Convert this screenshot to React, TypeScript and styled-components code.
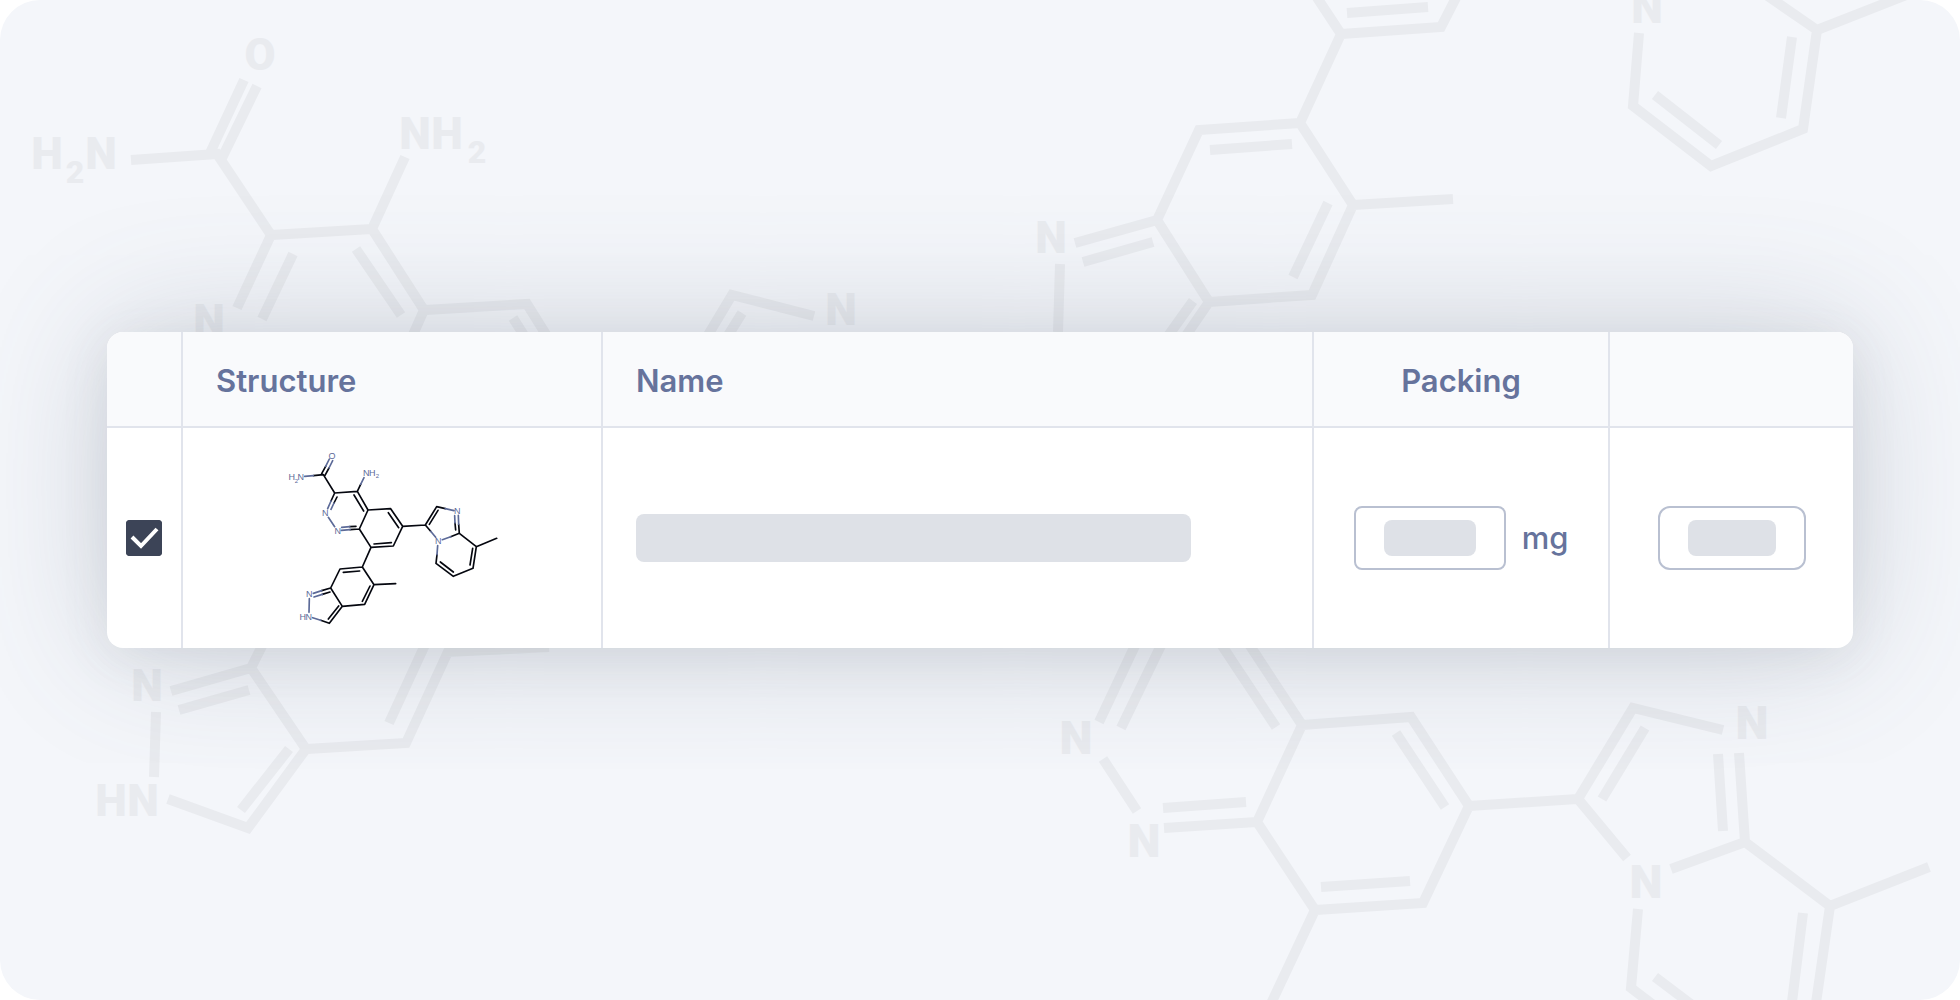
import React from "react";
import styled, { createGlobalStyle } from "styled-components";

const GlobalStyle = createGlobalStyle`
  *, *::before, *::after { box-sizing: border-box; }
  body {
    margin: 0;
    background: #ffffff;
    color: #66739c;
    font-family: Inter, "Liberation Sans", sans-serif;
  }
`;

const Stage = styled.main`
  position: relative;
  display: flex;
  align-items: center;
  min-height: 100vh;
  padding: 0 107px 20px;
  overflow: hidden;
  border-radius: 40px;
  background: #f4f6fa;
`;

const Backdrop = styled.svg`
  position: absolute;
  inset: 0;
  width: 100%;
  height: 100%;
  fill: none;
  stroke: #e9ebef;
  stroke-width: 10;

  text {
    fill: #e9ebef;
    stroke: none;
    font-family: Roboto, "Liberation Sans", sans-serif;
    font-weight: 900;
    text-anchor: middle;
  }
`;

const Card = styled.section`
  position: relative;
  flex: 1;
  overflow: hidden;
  border-radius: 16px;
  background: #ffffff;
  box-shadow:
    0 0 136px rgba(84, 98, 116, 0.24),
    0 8px 48px rgba(84, 98, 108, 0.1);
`;

const Table = styled.table`
  width: 100%;
  table-layout: fixed;
  border-collapse: separate;
  border-spacing: 0;
`;

const Col = styled.col<{ $width?: number }>`
  width: ${({ $width }) => ($width ? `${$width}px` : "auto")};
`;

const HeadCell = styled.th<{ $center?: boolean }>`
  height: 96px;
  padding: 4px 33px 0;
  border-right: 2px solid #e1e4ec;
  border-bottom: 2px solid #e1e4ec;
  background: #f9fafc;
  font-size: 31px;
  font-weight: 600;
  line-height: 40px;
  text-align: ${({ $center }) => ($center ? "center" : "left")};

  &:last-child { border-right: 0; }
`;

const Cell = styled.td<{ $inset?: number }>`
  height: 220px;
  padding: 0 ${({ $inset }) => $inset ?? 0}px;
  border-right: 2px solid #e1e4ec;
  vertical-align: middle;

  &:last-child { border-right: 0; }
`;

const Center = styled.div`
  display: flex;
  align-items: center;
  justify-content: center;
  gap: 16px;
`;

const Stack = styled.span`
  display: grid;
  place-items: center;

  > * { grid-area: 1 / 1; }
`;

const Checkbox = styled.input`
  appearance: none;
  width: 36px;
  height: 36px;
  margin: 0;
  border-radius: 4px;
  background: #ffffff;
  box-shadow: inset 0 0 0 2px #3c4457;

  &:checked { background: #3c4457; }
  &:not(:checked) + svg { display: none; }
`;

const Tick = styled.svg`
  width: 36px;
  height: 36px;
  fill: none;
  stroke: #ffffff;
  stroke-width: 4;
  pointer-events: none;
`;

const Placeholder = styled.span<{ $width?: number; $tall?: boolean }>`
  display: block;
  width: ${({ $width }) => ($width ? `${$width}px` : "calc(100% - 88px)")};
  height: ${({ $tall }) => ($tall ? 48 : 36)}px;
  border-radius: 8px;
  background: #dee1e7;
  pointer-events: none;
`;

const AmountInput = styled.input`
  width: 152px;
  height: 64px;
  padding: 0 16px;
  border: 2px solid #b9c0d1;
  border-radius: 8px;
  background: #ffffff;
  color: inherit;
  font: inherit;
`;

const Unit = styled.label`
  font-size: 31px;
  font-weight: 500;
  line-height: 40px;
`;

const ActionButton = styled.button`
  display: flex;
  align-items: center;
  justify-content: center;
  width: 148px;
  height: 64px;
  padding: 0;
  border: 2px solid #b9c0d1;
  border-radius: 12px;
  background: #ffffff;
  cursor: pointer;
`;

const Molecule = styled.svg`
  display: block;
  width: 240px;
  height: 204px;
  fill: none;
  stroke: #05070f;
  stroke-width: 5;
  stroke-linecap: round;
  stroke-linejoin: round;

  text {
    fill: #5c6a98;
    stroke: none;
    font-family: "Liberation Sans", Arial, sans-serif;
    font-size: 27px;
    text-anchor: middle;
  }
`;

type Atom = [label: string, x: number, y: number, size?: number];

const backdropAtoms: Atom[] = [
  ["O", 260, 70], ["H", 47, 169], ["2", 75, 183, 32], ["N", 101, 169],
  ["N", 415, 149], ["H", 447, 149], ["2", 477, 163, 32], ["N", 209, 336],
  ["N", 841, 325], ["N", 1051, 253], ["N", 1647, 23],
  ["N", 147, 701], ["H", 111, 816], ["N", 143, 816],
  ["N", 1076, 754, 47], ["N", 1144, 857, 47], ["N", 1646, 898, 47], ["N", 1752, 739, 47],
];

const backdropBonds = [
  // amide and upper-left ring
  "M131 160L217 154L271 235L372 229L405 157",
  "M210 153L244 80M221 160L257 86",
  "M271 235L237 308M293 254L262 319",
  "M372 229L424 310L527 304L565 365M356 249L401 315",
  "M513 318L532 348M424 310L404 355",
  "M705 340L732 295L814 316M742 313L724 342",
  // indazole, top centre
  "M1312 -10L1341 34L1441 27L1460 -10M1347 13L1428 7M1341 34L1300 123",
  "M1075 243L1157 220L1199 130L1300 123L1353 205L1312 295L1209 302L1157 220",
  "M1353 205L1453 199M1210 150L1292 144M1328 203L1293 277",
  "M1083 262L1153 242M1060 264L1058 332M1209 302L1185 337M1193 301L1168 336",
  // pyridine, top right
  "M1639 33L1633 106L1711 166L1803 129L1817 30L1759 -10M1817 30L1919 -10",
  "M1792 37L1781 118M1655 95L1719 145",
  // indazole, bottom left
  "M171 691L251 668L306 749L406 743L458 630M251 668L268 634M179 710L249 690",
  "M389 723L430 634M446 652L549 647M156 712L154 777",
  "M168 799L248 828L306 749M289 749L241 810",
  // cinnoline, bottom centre
  "M1099 722L1140 635M1121 728L1167 633M1103 759L1137 811M1163 808L1246 802",
  "M1164 828L1257 822L1302 725L1243 635M1276 727L1215 635",
  "M1302 725L1411 717L1469 806L1423 903L1315 910L1257 822",
  "M1396 733L1445 807M1321 887L1410 881M1315 910L1268 1010",
  // imidazopyridine, bottom right
  "M1469 806L1578 799L1633 708L1723 730M1645 728L1602 799M1578 799L1627 858",
  "M1671 869L1745 842L1739 753M1718 754L1723 831",
  "M1745 842L1830 906L1929 867M1830 906L1815 1010M1803 913L1791 1010",
  "M1638 909L1631 988L1660 1010M1655 977L1700 1011",
];

function BackdropArt() {
  return (
    <Backdrop viewBox="0 0 1960 1000" preserveAspectRatio="xMidYMid slice" aria-hidden="true">
      <path d={backdropBonds.join("")} />
      {backdropAtoms.map(([label, x, y, size = 45]) => (
        <text key={`${x}-${y}`} x={x} y={y} fontSize={size}>{label}</text>
      ))}
    </Backdrop>
  );
}

const moleculeAtoms: Atom[] = [
  ["O", 186, 86], ["H", 65, 149], ["2", 79, 158, 18], ["N", 92, 149],
  ["N", 289, 137], ["H", 307, 137], ["2", 322, 144, 18],
  ["N", 166, 258], ["N", 203, 312], ["N", 562, 253], ["N", 505, 343],
  ["N", 118, 502], ["H", 98, 569], ["N", 116, 569],
];

const carbonBonds = [
  "M130 137L160 134L194 189L262 184L272 163M155 131L167 109M165 136L177 114",
  "M194 189L183 213M201 201L192 219M262 184L294 240M252 195L281 243",
  "M294 240L362 236L398 289L370 348L303 352L268 297L294 240",
  "M268 297L240 299M258 289L239 290M355 248L386 293M312 342L364 338",
  "M303 352L277 411L210 417L182 474L217 529L284 523L312 464L277 411",
  "M312 464L377 461M220 427L269 423M300 468L277 514",
  "M182 474L155 482M180 486L157 493M217 529L178 580L152 571M206 528L175 567",
  "M398 289L466 285L500 230L526 236M478 283L504 241M466 285L482 304",
  "M568 310L566 283M557 300L555 279M568 310L542 320M498 400L501 374",
  "M498 400L550 439L609 415L619 350L568 310M511 396L550 426M608 355L600 405M619 350L680 325",
];

const heteroBonds = [
  "M104 139L130 137M167 109L178 87M177 114L188 92M272 163L282 143",
  "M183 213L173 236M192 219L183 238M175 262L194 290M214 301L240 299M215 292L239 290",
  "M155 482L130 490M157 493L132 501M118 506L117 547M152 571L128 563",
  "M526 236L552 242M482 304L497 322M566 283L565 256M555 279L554 257M542 320L517 329M501 374L503 347",
];

function StructureDrawing() {
  return (
    <Molecule viewBox="6 18 720 612" role="img" aria-label="Chemical structure">
      <path d={carbonBonds.join("")} />
      <path d={heteroBonds.join("")} stroke="#5c6a98" />
      {moleculeAtoms.map(([label, x, y, size]) => (
        <text key={`${x}-${y}`} x={x} y={y} style={size ? { fontSize: size } : undefined}>{label}</text>
      ))}
    </Molecule>
  );
}

export default function App() {
  return (
    <>
      <GlobalStyle />
      <Stage>
        <BackdropArt />
        <Card>
          <Table>
            <colgroup>
              <Col $width={76} />
              <Col $width={420} />
              <Col />
              <Col $width={296} />
              <Col $width={243} />
            </colgroup>
            <thead>
              <tr>
                <HeadCell />
                <HeadCell scope="col">Structure</HeadCell>
                <HeadCell scope="col">Name</HeadCell>
                <HeadCell scope="col" $center>Packing</HeadCell>
                <HeadCell />
              </tr>
            </thead>
            <tbody>
              <tr>
                <Cell>
                  <Stack>
                    <Checkbox type="checkbox" defaultChecked aria-label="Select compound" />
                    <Tick viewBox="0 0 36 36" aria-hidden="true">
                      <path d="M6 17L15 26L31 9" />
                    </Tick>
                  </Stack>
                </Cell>
                <Cell>
                  <Center><StructureDrawing /></Center>
                </Cell>
                <Cell $inset={33}>
                  <Placeholder $tall />
                </Cell>
                <Cell>
                  <Center>
                    <Stack>
                      <AmountInput id="packing-amount" type="text" inputMode="decimal" />
                      <Placeholder $width={92} />
                    </Stack>
                    <Unit htmlFor="packing-amount">mg</Unit>
                  </Center>
                </Cell>
                <Cell>
                  <Center>
                    <ActionButton type="button" aria-label="Add compound">
                      <Placeholder $width={88} />
                    </ActionButton>
                  </Center>
                </Cell>
              </tr>
            </tbody>
          </Table>
        </Card>
      </Stage>
    </>
  );
}
